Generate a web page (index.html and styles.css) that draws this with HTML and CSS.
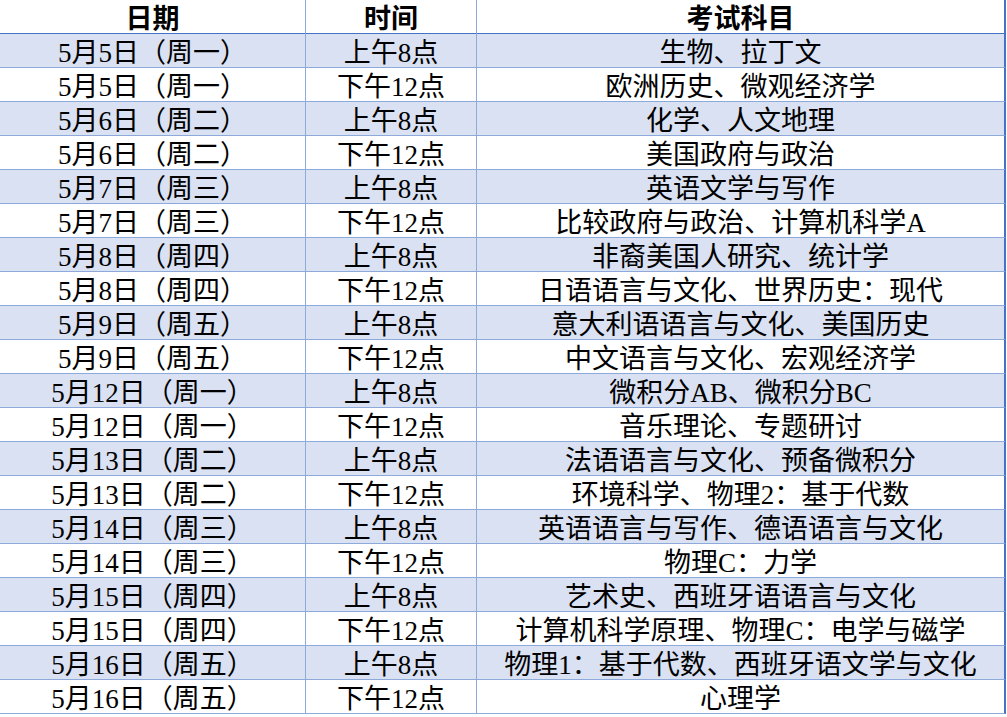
FILE: index.html
```html
<!DOCTYPE html>
<html lang="zh-CN">
<head>
<meta charset="utf-8">
<title>考试日程</title>
<link rel="stylesheet" href="styles.css">
</head>
<body>
<div class="sheet">
  <div class="cell head">日期</div><div class="cell head">时间</div><div class="cell head last">考试科目</div>

  <div class="cell band">5月5日（周一）</div><div class="cell band">上午8点</div><div class="cell band last">生物、拉丁文</div>
  <div class="cell">5月5日（周一）</div><div class="cell">下午12点</div><div class="cell last">欧洲历史、微观经济学</div>
  <div class="cell band">5月6日（周二）</div><div class="cell band">上午8点</div><div class="cell band last">化学、人文地理</div>
  <div class="cell">5月6日（周二）</div><div class="cell">下午12点</div><div class="cell last">美国政府与政治</div>
  <div class="cell band">5月7日（周三）</div><div class="cell band">上午8点</div><div class="cell band last">英语文学与写作</div>
  <div class="cell">5月7日（周三）</div><div class="cell">下午12点</div><div class="cell last">比较政府与政治、计算机科学A</div>
  <div class="cell band">5月8日（周四）</div><div class="cell band">上午8点</div><div class="cell band last">非裔美国人研究、统计学</div>
  <div class="cell">5月8日（周四）</div><div class="cell">下午12点</div><div class="cell last">日语语言与文化、世界历史：现代</div>
  <div class="cell band">5月9日（周五）</div><div class="cell band">上午8点</div><div class="cell band last">意大利语语言与文化、美国历史</div>
  <div class="cell">5月9日（周五）</div><div class="cell">下午12点</div><div class="cell last">中文语言与文化、宏观经济学</div>
  <div class="cell band">5月12日（周一）</div><div class="cell band">上午8点</div><div class="cell band last">微积分AB、微积分BC</div>
  <div class="cell">5月12日（周一）</div><div class="cell">下午12点</div><div class="cell last">音乐理论、专题研讨</div>
  <div class="cell band">5月13日（周二）</div><div class="cell band">上午8点</div><div class="cell band last">法语语言与文化、预备微积分</div>
  <div class="cell">5月13日（周二）</div><div class="cell">下午12点</div><div class="cell last">环境科学、物理2：基于代数</div>
  <div class="cell band">5月14日（周三）</div><div class="cell band">上午8点</div><div class="cell band last">英语语言与写作、德语语言与文化</div>
  <div class="cell">5月14日（周三）</div><div class="cell">下午12点</div><div class="cell last">物理C：力学</div>
  <div class="cell band">5月15日（周四）</div><div class="cell band">上午8点</div><div class="cell band last">艺术史、西班牙语语言与文化</div>
  <div class="cell">5月15日（周四）</div><div class="cell">下午12点</div><div class="cell last">计算机科学原理、物理C：电学与磁学</div>
  <div class="cell band">5月16日（周五）</div><div class="cell band">上午8点</div><div class="cell band last">物理1：基于代数、西班牙语文学与文化</div>
  <div class="cell">5月16日（周五）</div><div class="cell">下午12点</div><div class="cell last">心理学</div>
</div>
</body>
</html>
```

FILE: styles.css
```css
html, body {
  margin: 0;
  padding: 0;
  background: #ffffff;
}

.sheet {
  display: grid;
  grid-template-columns: 306px 171px 529px;
  grid-auto-rows: 34px;
  width: 1006px;
  font-family: "Liberation Serif", "Noto Sans CJK SC", serif;
  font-size: 27px;
  font-weight: normal;
  color: #000000;
}

.cell {
  box-sizing: border-box;
  display: flex;
  align-items: center;
  justify-content: center;
  white-space: nowrap;
  line-height: 27px;
  padding-top: 6px;
  border-right: 1px solid #8eaadb;
  border-bottom: 1px solid #8eaadb;
  background: #ffffff;
}

.cell.last {
  border-right: 2px solid #4472c4;
}

.cell.head {
  height: 35px;
  font-weight: bold;
  border-bottom: 2px solid #4472c4;
}

.cell.band {
  background: #d9e1f2;
}
```
